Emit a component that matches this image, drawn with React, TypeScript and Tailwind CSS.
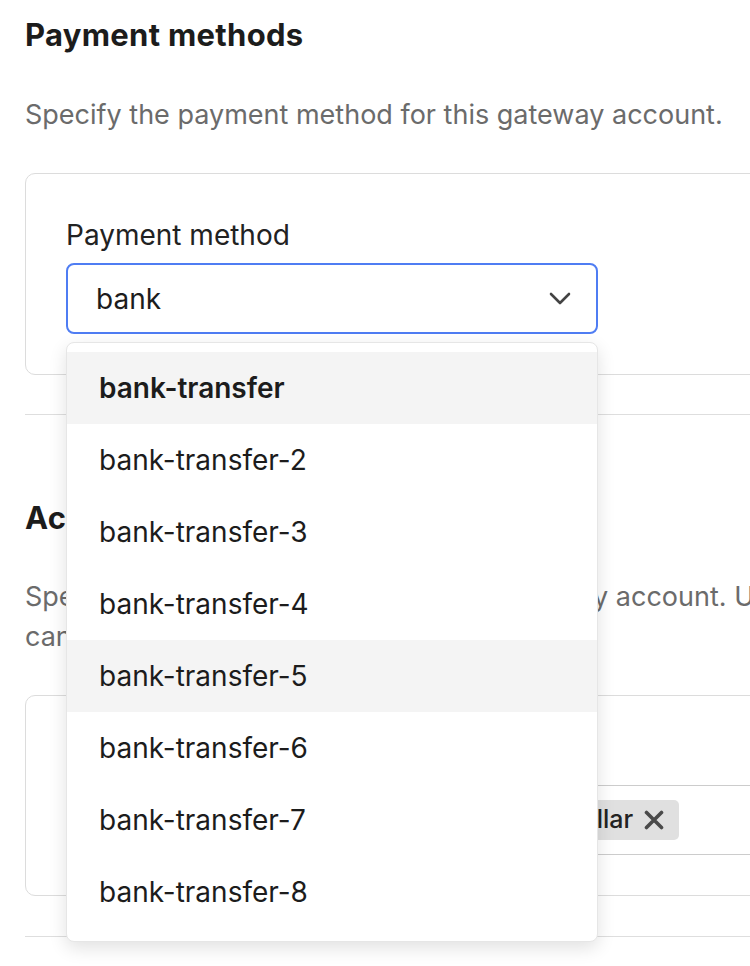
const options = [
  "bank-transfer",
  "bank-transfer-2",
  "bank-transfer-3",
  "bank-transfer-4",
  "bank-transfer-5",
  "bank-transfer-6",
  "bank-transfer-7",
  "bank-transfer-8",
];

const currencies = ["Swiss Franc", "British Pound", "US Dollar"];

const App: React.FC = () => {
  return (
    <div className="w-full min-h-screen overflow-hidden bg-white font-['Inter',sans-serif] text-[#1c1c1c]">
      <div className="w-[900px] pl-[25px]">
        {/* payment methods */}
        <section>
          <h2 className="pt-[17px] text-[31px] leading-[36px] font-bold tracking-[0.3px]">Payment methods</h2>
          <p className="mt-[42px] text-[27px] leading-[40px] text-[#6b6b6b]">
            Specify the payment method for this gateway account.
          </p>
          <div className="mt-[38px] rounded-[10px] border border-[#dcdcdc] px-[40px] pt-[43px] pb-[40px]">
            <label className="block text-[28px] leading-[36px] text-[#222]">Payment method</label>
            <div className="relative mt-[10px] w-[532px]">
              <div className="flex h-[71px] items-center justify-between rounded-[8px] border-2 border-[#4f7df3] pl-[28px] pr-[25px]">
                <span className="text-[28px]">bank</span>
                <svg width="22" height="13" viewBox="0 0 22 13" fill="none" stroke="#444" strokeWidth="2.6" strokeLinecap="round" strokeLinejoin="round">
                  <path d="M2 2 L11 11 L20 2" />
                </svg>
              </div>
              <ul className="absolute left-0 top-[79px] z-10 w-[532px] rounded-[8px] border border-[#e6e6e6] bg-white pt-[9px] pb-[13px] shadow-[0_6px_18px_rgba(0,0,0,0.12)]">
                {options.map((o, i) => (
                  <li
                    key={o}
                    className={
                      "flex h-[72px] items-center px-[32px] text-[28px] " +
                      (i === 0 ? "bg-[#f4f4f4] font-semibold " : "") +
                      (i === 4 ? "bg-[#f4f4f4]" : "")
                    }
                  >
                    {o}
                  </li>
                ))}
              </ul>
            </div>
          </div>
          <div className="mt-[39px] border-t border-[#dedede]" />
        </section>

        {/* accepted currencies */}
        <section>
          <h2 className="mt-[85px] text-[31px] leading-[36px] font-bold tracking-[0.3px]">Accepted currencies</h2>
          <p className="mt-[41px] text-[27px] leading-[40px] text-[#6b6b6b]">
            Specify the primary currency for this gateway account. Users
            <br />
            can choose from any of these at checkout.
          </p>
          <div className="mt-[38px] rounded-[10px] border border-[#dcdcdc] pl-[40px] pt-[43px] pb-[40px]">
            <label className="block text-[28px] leading-[36px] text-[#222]">Currencies</label>
            <div className="mt-[10px] flex h-[70px] items-center gap-[10px] rounded-l-[8px] border-y-[1.5px] border-l-[1.5px] border-[#cccccc] pl-[10px]">
              {currencies.map((c) => (
                <span
                  key={c}
                  className="flex h-[40px] items-center gap-[11px] rounded-[5px] bg-[#e0e0e0] pl-[10px] pr-[15px] text-[25px] font-medium text-[#222]"
                >
                  {c}
                  <svg width="20" height="20" viewBox="0 0 20 20" fill="none" stroke="#4a4a4a" strokeWidth="3.6" strokeLinecap="round">
                    <path d="M2.5 2.5 L17.5 17.5 M17.5 2.5 L2.5 17.5" />
                  </svg>
                </span>
              ))}
            </div>
          </div>
          <div className="mt-[40px] border-t border-[#dedede]" />
        </section>
      </div>
    </div>
  );
};

export default App;
